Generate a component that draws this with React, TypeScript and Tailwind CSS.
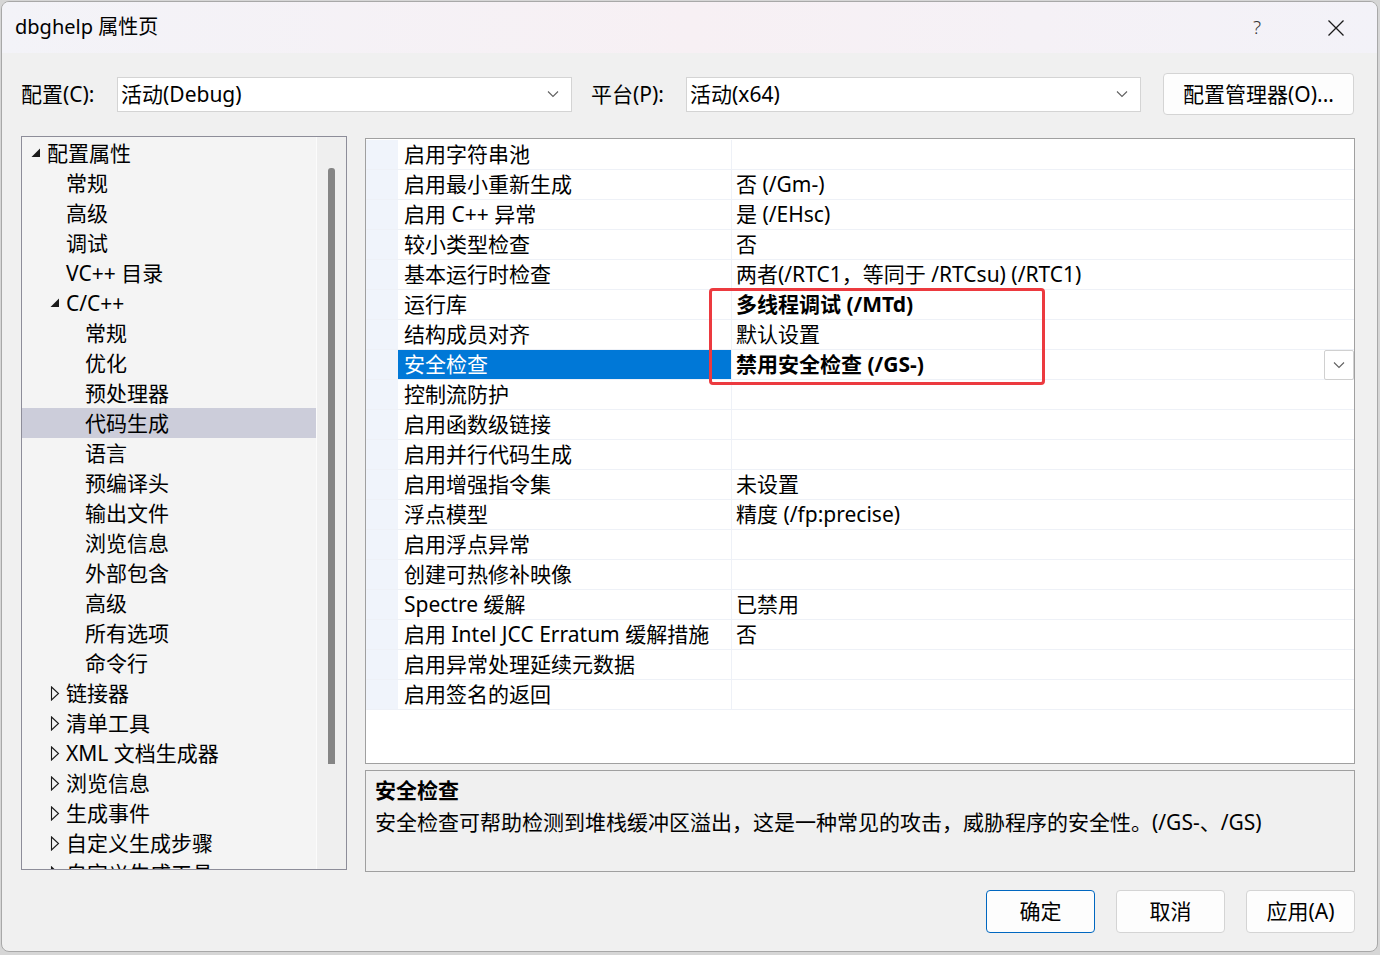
import React from "react";

type TreeItem = { label: string; level: 0 | 1 | 2; exp?: "open" | "closed"; selected?: boolean };

const tree: TreeItem[] = [
  { label: "配置属性", level: 0, exp: "open" },
  { label: "常规", level: 1 },
  { label: "高级", level: 1 },
  { label: "调试", level: 1 },
  { label: "VC++ 目录", level: 1 },
  { label: "C/C++", level: 1, exp: "open" },
  { label: "常规", level: 2 },
  { label: "优化", level: 2 },
  { label: "预处理器", level: 2 },
  { label: "代码生成", level: 2, selected: true },
  { label: "语言", level: 2 },
  { label: "预编译头", level: 2 },
  { label: "输出文件", level: 2 },
  { label: "浏览信息", level: 2 },
  { label: "外部包含", level: 2 },
  { label: "高级", level: 2 },
  { label: "所有选项", level: 2 },
  { label: "命令行", level: 2 },
  { label: "链接器", level: 1, exp: "closed" },
  { label: "清单工具", level: 1, exp: "closed" },
  { label: "XML 文档生成器", level: 1, exp: "closed" },
  { label: "浏览信息", level: 1, exp: "closed" },
  { label: "生成事件", level: 1, exp: "closed" },
  { label: "自定义生成步骤", level: 1, exp: "closed" },
  { label: "自定义生成工具", level: 1, exp: "closed" },
];

type Row = { name: string; value?: string; bold?: boolean; selected?: boolean };

const rows: Row[] = [
  { name: "启用字符串池" },
  { name: "启用最小重新生成", value: "否 (/Gm-)" },
  { name: "启用 C++ 异常", value: "是 (/EHsc)" },
  { name: "较小类型检查", value: "否" },
  { name: "基本运行时检查", value: "两者(/RTC1，等同于 /RTCsu) (/RTC1)" },
  { name: "运行库", value: "多线程调试 (/MTd)", bold: true },
  { name: "结构成员对齐", value: "默认设置" },
  { name: "安全检查", value: "禁用安全检查 (/GS-)", bold: true, selected: true },
  { name: "控制流防护" },
  { name: "启用函数级链接" },
  { name: "启用并行代码生成" },
  { name: "启用增强指令集", value: "未设置" },
  { name: "浮点模型", value: "精度 (/fp:precise)" },
  { name: "启用浮点异常" },
  { name: "创建可热修补映像" },
  { name: "Spectre 缓解", value: "已禁用" },
  { name: "启用 Intel JCC Erratum 缓解措施", value: "否" },
  { name: "启用异常处理延续元数据" },
  { name: "启用签名的返回" },
];

const levelPad = ["pl-[9px]", "pl-[28px]", "pl-[47px]"];

function Chevron({ className }: { className?: string }) {
  return (
    <svg width="12" height="8" viewBox="0 0 12 8" className={className}>
      <path d="M1 1.5 L6 6.5 L11 1.5" fill="none" stroke="#606060" strokeWidth="1.1" />
    </svg>
  );
}

function Expander({ exp }: { exp?: "open" | "closed" }) {
  if (exp === "open")
    return (
      <svg width="10" height="10" viewBox="0 0 10 10">
        <polygon points="9,0.5 9,9 0.5,9" fill="#1a1a1a" />
      </svg>
    );
  if (exp === "closed")
    return (
      <svg width="10" height="15" viewBox="0 0 10 15">
        <polygon points="1.5,1 8.5,7.5 1.5,14" fill="none" stroke="#1a1a1a" strokeWidth="1.1" />
      </svg>
    );
  return null;
}

function ComboBox({ text }: { text: string }) {
  return (
    <div className="flex h-[35px] w-[455px] items-center justify-between border border-[#d4d4d4] bg-white pl-[3px] pr-[12px]">
      <span>{text}</span>
      <Chevron />
    </div>
  );
}

export default function App() {
  return (
    <div
      className="h-[955px] w-[1380px] overflow-hidden bg-[#d6d6d6] p-[1px] text-[21px] leading-none text-black"
      style={{ fontFamily: '"Noto Sans", "Noto Sans CJK SC", sans-serif' }}
    >
      <div className="flex h-[951px] w-[1377px] flex-col overflow-hidden rounded-[8px] border border-[#a8a8a8] bg-[#f0f0f0]">
        {/* title bar */}
        <div className="flex h-[51px] shrink-0 items-center bg-gradient-to-r from-[#f3f3f8] via-[#f7f0f4] to-[#f3f2f8]">
          <div className="pl-[13px] pb-[1px] text-[20px]">dbghelp 属性页</div>
          <div className="flex-1" />
          <div className="flex w-[40px] justify-center text-[19px] font-light text-[#333]">?</div>
          <div className="w-[18px]" />
          <div className="flex w-[82px] justify-center">
            <svg width="18" height="18" viewBox="0 0 18 18">
              <path d="M1.5 1.5 L16.5 16.5 M16.5 1.5 L1.5 16.5" stroke="#1a1a1a" strokeWidth="1.3" />
            </svg>
          </div>
        </div>

        {/* body */}
        <div className="flex flex-1 flex-col pl-[19px] pr-[22px]">
          {/* config row */}
          <div className="mt-[20px] flex h-[42px] items-center">
            <div className="w-[96px]">配置(C):</div>
            <ComboBox text="活动(Debug)" />
            <div className="ml-[19px] w-[95px]">平台(P):</div>
            <ComboBox text="活动(x64)" />
            <div className="ml-[22px] flex h-[42px] w-[191px] items-center justify-center rounded-[4px] border border-[#d4d4d4] bg-[#fdfdfd]">
              配置管理器(O)...
            </div>
          </div>

          {/* main */}
          <div className="mt-[21px] flex gap-[18px]">
            {/* tree */}
            <div className="flex h-[734px] w-[326px] overflow-hidden border border-[#8d8d99] bg-[#f4f4f4]">
              <div className="flex-1 overflow-hidden pt-[1px]">
                {tree.map((t, i) => (
                  <div
                    key={i}
                    className={`flex h-[30px] items-center ${levelPad[t.level]} ${t.selected ? "bg-[#cccdda]" : ""}`}
                  >
                    <div className="flex w-[16px] shrink-0 items-center">
                      <Expander exp={t.exp} />
                    </div>
                    <span className="whitespace-nowrap">{t.label}</span>
                  </div>
                ))}
              </div>
              <div className="flex w-[30px] shrink-0 justify-center border-l border-[#fbfbfb] bg-[#efefef] pt-[31px]">
                <div className="h-[596px] w-[7px] rounded-t-[3px] bg-[#858585]" />
              </div>
            </div>

            {/* right column */}
            <div className="flex w-[990px] flex-col pt-[2px]">
              <div className="relative h-[626px] border border-[#a0a0a0] bg-white pt-[1px]">
                {rows.map((r, i) => (
                  <div key={i} className="flex h-[30px] border-b border-[#eef1f7]">
                    <div className="w-[32px] shrink-0 bg-[#f0f4fb]" />
                    <div
                      className={`flex w-[334px] shrink-0 items-center border-r border-[#eef1f7] pl-[6px] whitespace-nowrap ${
                        r.selected ? "bg-[#0078d7] text-white" : ""
                      }`}
                    >
                      {r.name}
                    </div>
                    <div className="flex flex-1 items-center justify-between pl-[4px]">
                      <span className={`whitespace-nowrap ${r.bold ? "font-bold" : ""}`}>{r.value ?? ""}</span>
                      {r.selected && (
                        <div className="flex h-[30px] w-[30px] items-center justify-center rounded-[2px] border border-[#d0d0d0] bg-white">
                          <Chevron />
                        </div>
                      )}
                    </div>
                  </div>
                ))}
                <div className="pointer-events-none absolute left-[343px] top-[149px] h-[97px] w-[336px] rounded-[4px] border-[3px] border-[#ec3a3f]" />
              </div>
              <div className="mt-[6px] h-[102px] border border-[#a0a0a0] bg-[#f0f0f0] px-[9px] pt-[8px]">
                <div className="font-bold leading-[22px]">安全检查</div>
                <div className="mt-[10px] leading-[22px]">
                  安全检查可帮助检测到堆栈缓冲区溢出，这是一种常见的攻击，威胁程序的安全性。(/GS-、/GS)
                </div>
              </div>
            </div>
          </div>

          {/* buttons */}
          <div className="mt-[18px] flex justify-end gap-[21px]">
            <div className="flex h-[43px] w-[109px] items-center justify-center rounded-[4px] border border-[#0067c0] bg-[#fdfdfd]">
              确定
            </div>
            <div className="flex h-[43px] w-[109px] items-center justify-center rounded-[4px] border border-[#d4d4d4] bg-[#fdfdfd]">
              取消
            </div>
            <div className="flex h-[43px] w-[109px] items-center justify-center rounded-[4px] border border-[#d4d4d4] bg-[#fdfdfd]">
              应用(A)
            </div>
          </div>
        </div>
      </div>
    </div>
  );
}
